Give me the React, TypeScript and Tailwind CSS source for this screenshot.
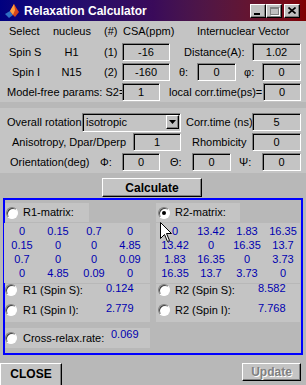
import React from "react";

function Field({ w, v }: { w: string; v: string }) {
  return (
    <div
      className={`${w} h-[18px] shrink-0 flex items-center justify-center bg-[#c4c4c4] border border-t-[#808080] border-l-[#808080] border-r-white border-b-white shadow-[inset_1px_1px_0_#000]`}
    >
      <span className="leading-none">{v}</span>
    </div>
  );
}

function Radio({ on }: { on?: boolean }) {
  return (
    <div className="w-[12px] h-[12px] rounded-full shrink-0 bg-white border border-t-[#808080] border-l-[#808080] border-r-white border-b-white shadow-[inset_1px_1px_0_#404040] flex items-center justify-center">
      {on && <div className="w-[4px] h-[4px] rounded-full bg-black" />}
    </div>
  );
}

function Logo() {
  return (
    <svg width="16" height="16" viewBox="0 0 16 16" className="shrink-0">
      <polygon points="1,11 6,8 9,12 5,15" fill="#2f6fc4" />
      <polygon points="6,8 10,1 13,6 15,9 11,14 9,12" fill="#d8461a" />
      <polygon points="10,1 11,7 9,12 6,8" fill="#ffa040" />
    </svg>
  );
}

const R1 = [
  ["0", "0.15", "0.7", "0"],
  ["0.15", "0", "0", "4.85"],
  ["0.7", "0", "0", "0.09"],
  ["0", "4.85", "0.09", "0"],
];
const R2 = [
  ["0", "13.42", "1.83", "16.35"],
  ["13.42", "0", "16.35", "13.7"],
  ["1.83", "16.35", "0", "3.73"],
  ["16.35", "13.7", "3.73", "0"],
];

function Matrix({ m }: { m: string[][] }) {
  return (
    <div className="grid grid-cols-[repeat(4,36px)] text-[#0000b0]">
      {m.flat().map((v, i) => (
        <div key={i} className="h-[14px] leading-[14px] text-center">
          {v}
        </div>
      ))}
    </div>
  );
}

export default function App() {
  return (
    <div className="relative w-[306px] h-[385px] overflow-hidden bg-[#b8b8b8] flex flex-col text-[11px] text-black font-['Liberation_Sans',Arial,sans-serif]">
      {/* Title bar */}
      <div className="h-[21px] shrink-0 flex items-center bg-linear-to-r from-[#000080] via-[#3a0a5a] to-[#800000] pl-[4px] pr-[6px]">
        <Logo />
        <span className="ml-[4px] text-white font-bold text-[12px] leading-none">Relaxation Calculator</span>
        <div className="ml-auto flex items-center">
          <div className="w-[16px] h-[14px] bg-[#c0c0c0] border border-t-white border-l-white border-r-black border-b-black shadow-[inset_-1px_-1px_0_#808080] flex items-end justify-start pl-[3px] pb-[2px]">
            <div className="w-[6px] h-[2px] bg-black" />
          </div>
          <div className="w-[16px] h-[14px] bg-[#c0c0c0] border border-t-white border-l-white border-r-black border-b-black shadow-[inset_-1px_-1px_0_#808080] flex items-center justify-center">
            <div className="w-[9px] h-[8px] border border-[#808080] border-t-2 shadow-[1px_1px_0_#fff]" />
          </div>
          <div className="ml-[2px] w-[16px] h-[14px] bg-[#c0c0c0] border border-t-white border-l-white border-r-black border-b-black shadow-[inset_-1px_-1px_0_#808080] flex items-center justify-center">
            <svg width="8" height="7" viewBox="0 0 8 7">
              <path d="M0.5 0.5 L7.5 6.5 M7.5 0.5 L0.5 6.5" stroke="#000" strokeWidth="1.6" />
            </svg>
          </div>
        </div>
      </div>

      {/* Top panel */}
      <div className="h-[81px] shrink-0 bg-[#c4c4c4] flex flex-col">
        <div className="h-[21px] flex items-center whitespace-nowrap">
          <span className="w-[53px] pl-[9px] shrink-0">Select</span>
          <span className="w-[51px] shrink-0">nucleus</span>
          <span className="w-[19px] shrink-0">(#)</span>
          <span className="w-[74px] shrink-0">CSA(ppm)</span>
          <span>Internuclear Vector</span>
        </div>
        <div className="h-[20px] flex items-center whitespace-nowrap">
          <span className="w-[53px] pl-[9px] shrink-0">Spin S</span>
          <span className="w-[37px] text-center shrink-0">H1</span>
          <span className="ml-[14px] w-[18px] shrink-0">(1)</span>
          <Field w="w-[48px]" v="-16" />
          <span className="ml-[14px] w-[68px] shrink-0">Distance(A):</span>
          <Field w="w-[49px]" v="1.02" />
        </div>
        <div className="h-[20px] flex items-center whitespace-nowrap">
          <span className="w-[53px] pl-[12px] shrink-0">Spin I</span>
          <span className="w-[37px] text-center shrink-0">N15</span>
          <span className="ml-[14px] w-[18px] shrink-0">(2)</span>
          <Field w="w-[48px]" v="-160" />
          <span className="ml-[9px] w-[18px] shrink-0">θ:</span>
          <Field w="w-[39px]" v="0" />
          <span className="ml-[8px] w-[18px] shrink-0">φ:</span>
          <Field w="w-[39px]" v="0" />
        </div>
        <div className="h-[20px] flex items-center whitespace-nowrap">
          <span className="w-[122px] pl-[7px] shrink-0">Model-free params: S2=</span>
          <Field w="w-[38px]" v="1" />
          <span className="ml-[9px] w-[94px] shrink-0">local corr.time(ps)=</span>
          <Field w="w-[38px]" v="0" />
        </div>
      </div>

      {/* Rotation panel */}
      <div className="mt-[6px] h-[65px] shrink-0 bg-[#c4c4c4] pt-[4px] flex flex-col">
        <div className="h-[20px] flex items-center whitespace-nowrap">
          <span className="w-[82px] pl-[7px] shrink-0">Overall rotation</span>
          <div className="w-[99px] h-[19px] shrink-0 flex items-center bg-[#c4c4c4] border border-t-[#808080] border-l-[#808080] border-r-white border-b-white shadow-[inset_1px_1px_0_#000] pl-[3px] pr-[1px]">
            <span className="flex-1">isotropic</span>
            <div className="w-[13px] h-[14px] bg-[#c0c0c0] border border-t-white border-l-white border-r-black border-b-black shadow-[inset_-1px_-1px_0_#808080] flex items-center justify-center">
              <svg width="7" height="4" viewBox="0 0 7 4">
                <path d="M0 0 H7 L3.5 4 Z" fill="#000" />
              </svg>
            </div>
          </div>
          <span className="ml-[5px] w-[66px] shrink-0">Corr.time (ns)</span>
          <Field w="w-[49px]" v="5" />
        </div>
        <div className="h-[20px] flex items-center whitespace-nowrap">
          <span className="w-[133px] pl-[12px] shrink-0">Anisotropy, Dpar/Dperp</span>
          <Field w="w-[48px]" v="1" />
          <span className="ml-[11px] w-[60px] shrink-0">Rhombicity</span>
          <Field w="w-[49px]" v="0" />
        </div>
        <div className="h-[20px] flex items-center whitespace-nowrap">
          <span className="w-[100px] pl-[10px] shrink-0">Orientation(deg)</span>
          <span className="w-[22px] shrink-0">Φ:</span>
          <Field w="w-[38px]" v="0" />
          <span className="ml-[10px] w-[22px] shrink-0">Θ:</span>
          <Field w="w-[39px]" v="0" />
          <span className="ml-[8px] w-[23px] shrink-0">Ψ:</span>
          <Field w="w-[39px]" v="0" />
        </div>
      </div>

      {/* Calculate */}
      <div className="h-[25px] shrink-0 pt-[5px]">
        <div className="ml-[102px] w-[100px] h-[19px] bg-[#c4c4c4] border border-t-white border-l-white border-r-black border-b-black shadow-[inset_-1px_-1px_0_#808080] flex items-center justify-center font-bold text-[12px]">
          Calculate
        </div>
      </div>

      {/* Results panel */}
      <div className="mx-[3px] h-[157px] shrink-0 border-2 border-[#0000ff] bg-[#b8b8b8] flex gap-[6px]">
        {/* left column */}
        <div className="w-[145px] shrink-0 flex flex-col">
          <div className="mt-[3px] w-[84px] h-[19px] bg-[#c4c4c4] flex items-center pl-[1px]">
            <Radio />
            <span className="ml-[5px]">R1-matrix:</span>
          </div>
          <div className="mt-[1px] h-[60px] bg-[#c4c4c4] pt-[1px] -ml-[1px]">
            <Matrix m={R1} />
          </div>
          <div className="mt-[1px] h-[38px] bg-[#c4c4c4] flex flex-col whitespace-nowrap">
            <div className="h-[12px] flex items-center">
              <Radio />
              <span className="ml-[6px] w-[83px] shrink-0">R1 (Spin S):</span>
              <span className="mb-[4px] text-[#0000b0]">0.124</span>
            </div>
            <div className="mt-[8px] h-[12px] flex items-center">
              <Radio />
              <span className="ml-[6px] w-[83px] shrink-0">R1 (Spin I):</span>
              <span className="mb-[4px] text-[#0000b0]">2.779</span>
            </div>
          </div>
          <div className="mt-[6px] h-[20px] bg-[#c4c4c4] flex items-center whitespace-nowrap">
            <Radio />
            <span className="ml-[6px] w-[88px] shrink-0">Cross-relax.rate:</span>
            <span className="mb-[7px] text-[#0000b0]">0.069</span>
          </div>
        </div>
        {/* right column */}
        <div className="w-[144px] shrink-0 flex flex-col">
          <div className="mt-[3px] w-[84px] h-[19px] bg-[#c4c4c4] flex items-center pl-[2px]">
            <Radio on />
            <span className="ml-[5px]">R2-matrix:</span>
          </div>
          <div className="mt-[1px] h-[60px] bg-[#c4c4c4] pt-[1px] pl-[1px]">
            <Matrix m={R2} />
          </div>
          <div className="mt-[1px] h-[38px] bg-[#c4c4c4] flex flex-col whitespace-nowrap">
            <div className="h-[12px] flex items-center pl-[2px]">
              <Radio />
              <span className="ml-[5px] w-[83px] shrink-0">R2 (Spin S):</span>
              <span className="mb-[4px] text-[#0000b0]">8.582</span>
            </div>
            <div className="mt-[8px] h-[12px] flex items-center pl-[2px]">
              <Radio />
              <span className="ml-[5px] w-[83px] shrink-0">R2 (Spin I):</span>
              <span className="mb-[4px] text-[#0000b0]">7.768</span>
            </div>
          </div>
        </div>
      </div>

      {/* Bottom buttons */}
      <div className="flex-1 flex items-start pt-[8px]">
        <div className="w-[62px] h-[24px] bg-[#c4c4c4] border border-t-white border-l-white border-r-black border-b-black shadow-[inset_-1px_-1px_0_#808080] flex items-center justify-center font-bold text-[12px] pb-[2px]">
          CLOSE
        </div>
        <div className="ml-auto mr-[5px] w-[59px] h-[18px] bg-[#c4c4c4] border border-t-white border-l-white border-r-black border-b-black shadow-[inset_-1px_-1px_0_#808080] flex items-center justify-center font-bold text-[12px] text-[#808080] [text-shadow:1px_1px_0_#fff]">
          Update
        </div>
      </div>

      {/* mouse cursor */}
      <svg
        className="absolute left-[160px] top-[222px]"
        width="13"
        height="21"
        viewBox="0 0 13 21"
      >
        <path
          d="M0.5 0.5 L0.5 16.5 L4.5 12.5 L7.5 19.5 L9.5 18.5 L6.5 11.5 L11.5 11.5 Z"
          fill="#fff"
          stroke="#000"
          strokeWidth="1"
        />
      </svg>
    </div>
  );
}
